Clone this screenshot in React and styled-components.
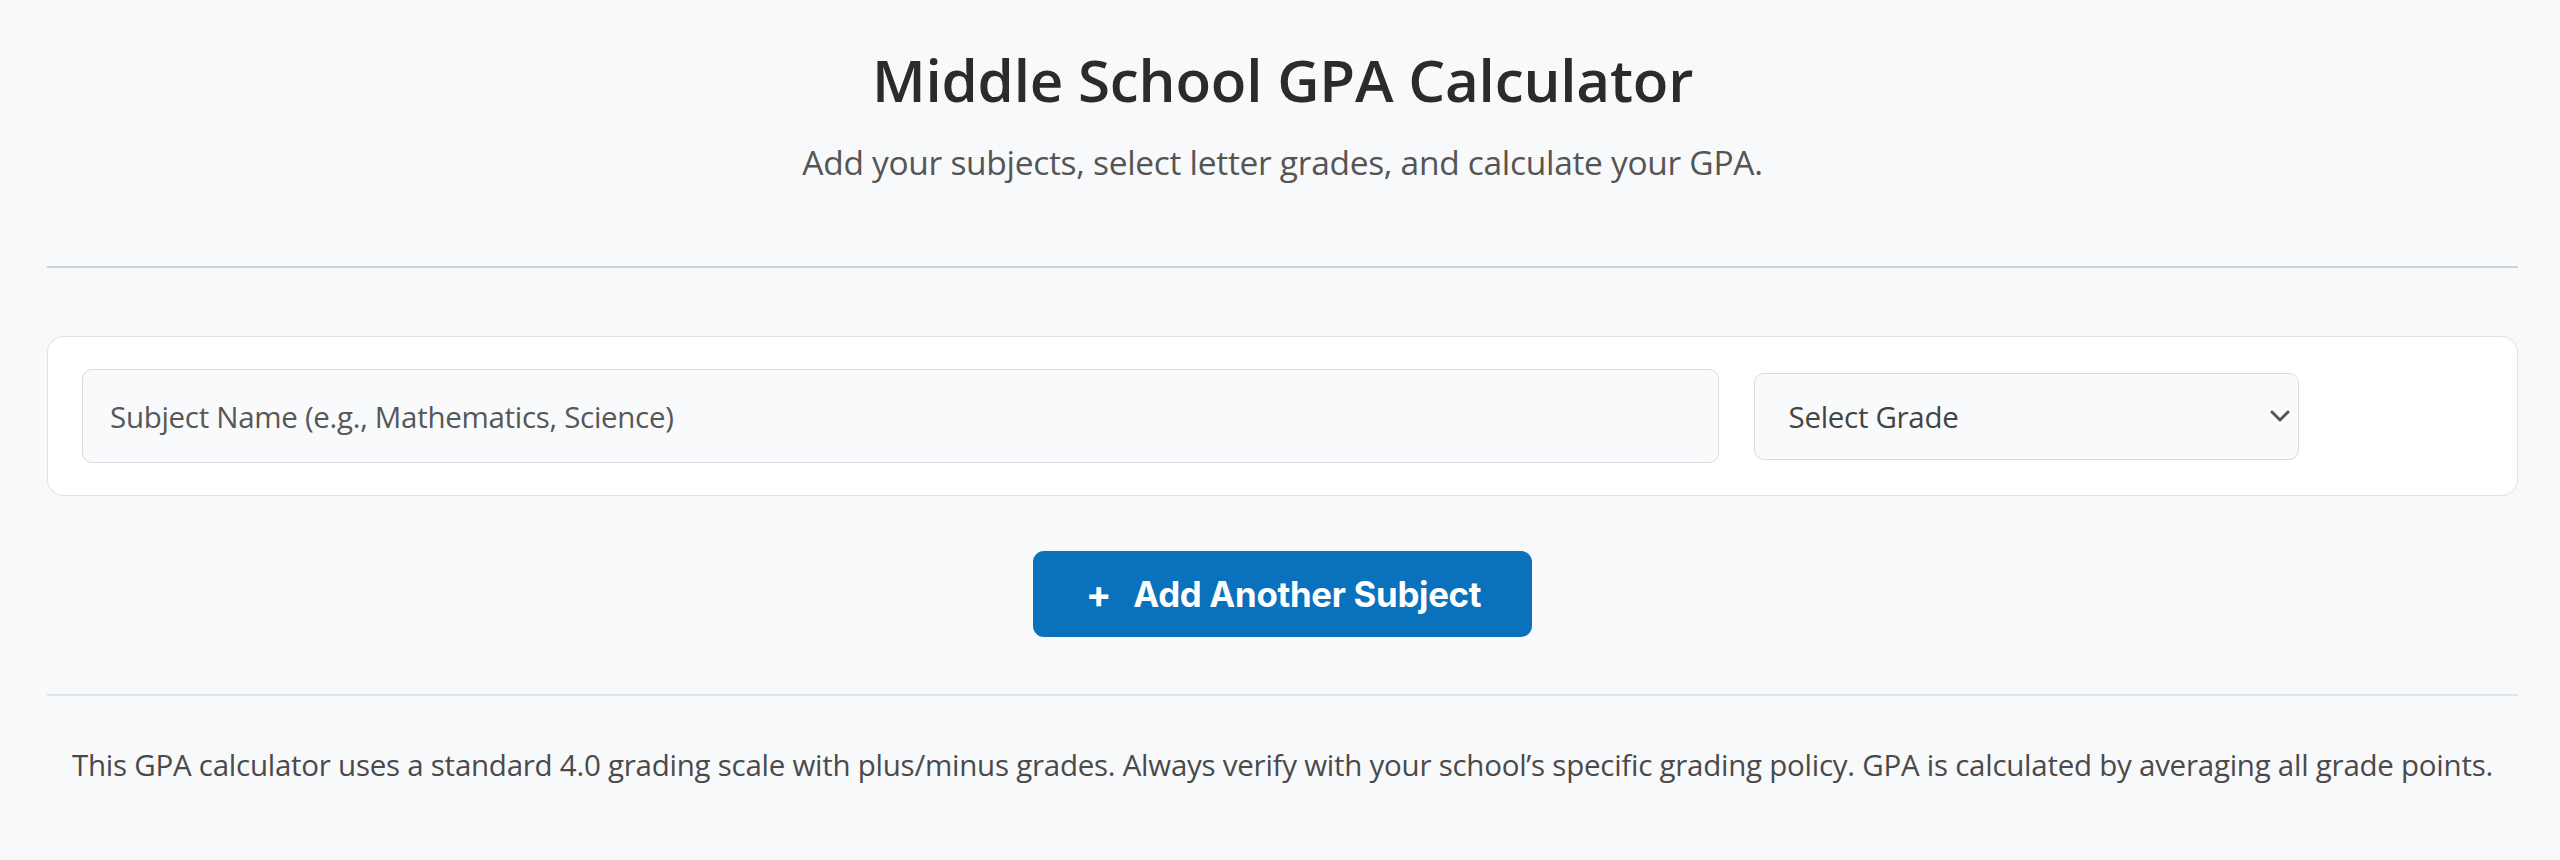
import React, { useState } from "react";
import styled, { createGlobalStyle } from "styled-components";

const GlobalStyle = createGlobalStyle`
  * { box-sizing: border-box; }
  html, body { margin: 0; padding: 0; }
  body {
    background: #f8f9fb;
    font-family: "Open Sans", "Noto Sans", sans-serif;
    color: #333;
  }
`;

const Page = styled.main`
  padding: 44px 42px 40px 47px;
`;

const Header = styled.header`
  text-align: center;
`;

const Title = styled.h1`
  margin: 0;
  font-size: 58.3px;
  line-height: 72px;
  font-weight: 600;
  color: #2b2b2b;
  letter-spacing: -0.2px;
`;

const Subtitle = styled.p`
  margin: 23px 0 0;
  font-size: 33.5px;
  line-height: 46px;
  color: #555;
  letter-spacing: -0.3px;
`;

const Divider = styled.hr`
  margin: ${(p) => p.$top}px 0 0;
  border: none;
  height: ${(p) => p.$thick}px;
  background: ${(p) => p.$color};
`;

const Card = styled.section`
  margin-top: 68px;
  background: #fff;
  border: 1px solid #dfe1e4;
  border-radius: 16px;
  padding: 32px 34px;
`;

const SubjectRow = styled.div`
  display: grid;
  grid-template-columns: 3fr 1fr 149px;
  gap: 35px;
  align-items: center;
`;

const TextInput = styled.input`
  height: 94px;
  width: 100%;
  padding: 0 27px;
  border: 1px solid #d9dbde;
  border-radius: 10px;
  background: #f9fafb;
  font-family: inherit;
  font-size: 29.5px;
  color: #333;
  letter-spacing: -0.3px;
  outline: none;
  &::placeholder { color: #575757; }
`;

const SelectWrap = styled.div`
  position: relative;
  height: 87px;
`;

const Select = styled.select`
  appearance: none;
  -webkit-appearance: none;
  width: 100%;
  height: 100%;
  padding: 0 60px 0 34px;
  border: 1px solid #d9dbde;
  border-radius: 10px;
  background: #f9fafb;
  font-family: inherit;
  font-size: 29.5px;
  color: #444;
  letter-spacing: -0.3px;
  outline: none;
`;

const Chevron = styled.svg`
  position: absolute;
  right: 9px;
  top: 50%;
  width: 20px;
  height: 12px;
  transform: translateY(-50%);
  pointer-events: none;
`;

const Slot = styled.div``;

const Actions = styled.div`
  display: flex;
  justify-content: center;
  margin-top: 55px;
`;

const AddButton = styled.button`
  display: inline-flex;
  align-items: center;
  gap: 22px;
  height: 86px;
  padding: 0 51px 0 53px;
  border: none;
  border-radius: 11px;
  background: #0a71bd;
  color: #fff;
  font-family: "Inter", "Roboto", sans-serif;
  font-weight: 700;
  font-size: 34.8px;
  letter-spacing: -0.3px;
  cursor: pointer;
`;

const Plus = styled.span`
  font-size: 38px;
  line-height: 1;
  font-weight: 700;
`;

const Note = styled.p`
  margin: 46px 0 0;
  text-align: center;
  font-size: 29.5px;
  line-height: 45px;
  color: #4a4a4a;
  letter-spacing: -0.25px;
`;

const grades = ["A+", "A", "A-", "B+", "B", "B-", "C+", "C", "C-", "D+", "D", "D-", "F"];

export default function App() {
  const [rows] = useState([{ id: 1 }]);
  return (
    <>
      <GlobalStyle />
      <Page>
        <Header>
          <Title>Middle School GPA Calculator</Title>
          <Subtitle>Add your subjects, select letter grades, and calculate your GPA.</Subtitle>
        </Header>
        <Divider $top={81} $thick={2} $color="#cfd2d6" />
        <Card>
          {rows.map((r) => (
            <SubjectRow key={r.id}>
              <TextInput placeholder="Subject Name (e.g., Mathematics, Science)" />
              <SelectWrap>
                <Select defaultValue="">
                  <option value="">Select Grade</option>
                  {grades.map((g) => (
                    <option key={g} value={g}>{g}</option>
                  ))}
                </Select>
                <Chevron viewBox="0 0 20 12" fill="none">
                  <path d="M2 2l8 8 8-8" stroke="#555" strokeWidth="3" strokeLinecap="round" strokeLinejoin="round" />
                </Chevron>
              </SelectWrap>
              <Slot />
            </SubjectRow>
          ))}
        </Card>
        <Actions>
          <AddButton type="button">
            <Plus>+</Plus>
            Add Another Subject
          </AddButton>
        </Actions>
        <Divider $top={57} $thick={1.5} $color="#e1e4e8" />
        <Note>
          This GPA calculator uses a standard 4.0 grading scale with plus/minus grades. Always verify with your school’s specific grading policy. GPA is calculated by averaging all grade points.
        </Note>
      </Page>
    </>
  );
}
